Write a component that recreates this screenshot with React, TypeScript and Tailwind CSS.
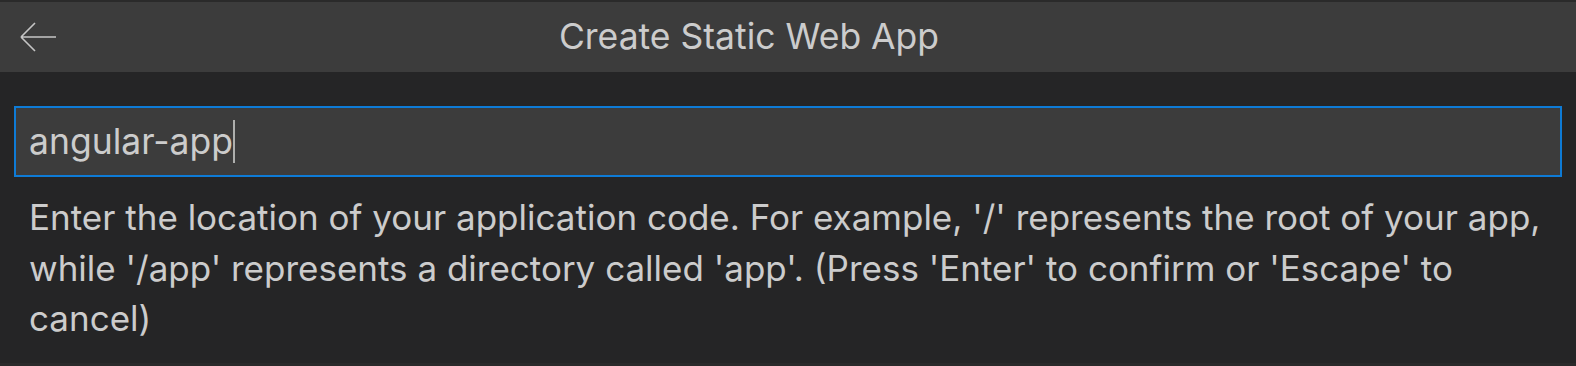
import React from "react"

const FONT = { fontFamily: "Inter, 'Noto Sans', sans-serif" }

function BackArrow() {
  return (
    <svg width="40" height="36" viewBox="0 0 40 36" fill="none" className="text-[#c5c5c5]">
      <path d="M3 18H38M3 18L17 4M3 18L17 32" stroke="currentColor" strokeWidth="1.6" />
    </svg>
  )
}

export default function App() {
  return (
    <div className="w-[1576px] h-[366px] bg-[#2a2a2a] pt-[2px] pb-[3px] flex flex-col text-[#cccccc]" style={FONT}>
      <div className="h-[70px] bg-[#3c3c3c] flex items-center shrink-0">
        <div className="w-[72px] flex items-center pl-[18px]">
          <BackArrow />
        </div>
        <div className="flex-1 text-center text-[35.5px] leading-[70px] whitespace-nowrap">Create Static Web App</div>
        <div className="w-[150px]" />
      </div>

      <div className="flex-1 bg-[#252526] pt-[34px] px-[14px]">
        <div className="h-[71px] border-2 border-[#0e7bd6] bg-[#3c3c3c] flex items-center pl-[13px]">
          <span className="text-[35.5px] leading-[67px] whitespace-nowrap">angular-app</span>
          <span className="w-[2px] h-[43px] bg-[#aeafad]" />
        </div>
        <div className="pt-[15px] pl-[15px] text-[35px] leading-[50.5px]">
          <div className="whitespace-nowrap">Enter the location of your application code. For example, '/' represents the root of your app,</div>
          <div className="whitespace-nowrap">while '/app' represents a directory called 'app'. (Press 'Enter' to confirm or 'Escape' to</div>
          <div className="whitespace-nowrap">cancel)</div>
        </div>
      </div>
    </div>
  )
}
